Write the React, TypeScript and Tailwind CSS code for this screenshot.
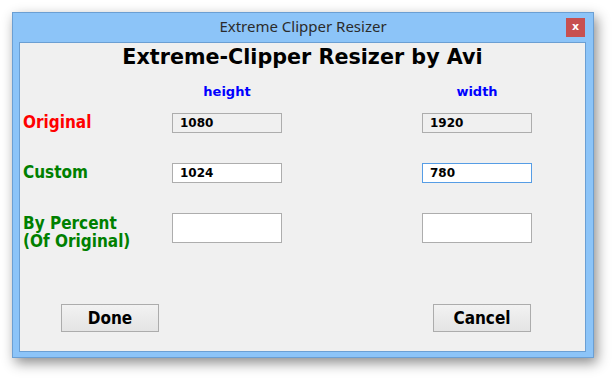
import React from 'react';

const labelFont = { fontFamily: '"DejaVu Sans Condensed", "DejaVu Sans", sans-serif' };

interface FieldProps {
  value?: string;
  readOnly?: boolean;
  focused?: boolean;
  tall?: boolean;
}

const Field: React.FC<FieldProps> = ({ value = '', readOnly = false, focused = false, tall = false }) => {
  const bg = readOnly ? 'bg-[#f0f0f0]' : 'bg-white';
  const border = focused ? 'border-[#569de5]' : 'border-[#adadad]';
  const h = tall ? 'h-[30px]' : 'h-[20px]';
  return (
    <div
      className={`w-[110px] ${h} ${bg} border ${border} flex items-center pl-[7px] text-[12px] font-bold text-black font-['DejaVu_Sans',sans-serif]`}
    >
      {value}
    </div>
  );
};

const WinButton: React.FC<{ label: string }> = ({ label }) => (
  <div
    style={labelFont}
    className="w-[98px] h-[28px] border border-[#acacac] bg-gradient-to-b from-[#f2f2f2] to-[#e4e4e4] flex items-center justify-center text-[17px] font-bold text-black leading-none"
  >
    {label}
  </div>
);

export default function App() {
  return (
    <div className="w-[614px] h-[379px] bg-white pl-[12px] pt-[12px]">
      <div className="w-[582px] h-[346px] bg-[#8cc4f8] border border-[#6b9fd3] shadow-[3px_5px_12px_rgba(0,0,0,0.45)] flex flex-col">
        {/* Title bar */}
        <div className="relative h-[29px] flex items-center justify-center">
          <span className="text-[15px] text-[#2b2b2b] font-['Noto_Sans',sans-serif] leading-none pb-[2px]">
            Extreme Clipper Resizer
          </span>
          <div className="absolute right-[8px] top-[5px] w-[19px] h-[19px] bg-[#c75050] flex items-center justify-center text-white text-[11px] font-bold font-['DejaVu_Sans',sans-serif] leading-none pb-[2px]">
            x
          </div>
        </div>

        {/* Client area */}
        <div className="ml-[6px] mr-[7px] h-[310px] border border-[#6b9fd3] bg-[#f0f0f0] flex flex-col">
          <h1 className="pt-[2px] text-center text-[20.7px] leading-[24px] font-bold text-black font-['DejaVu_Sans',sans-serif]">
            Extreme-Clipper Resizer by Avi
          </h1>

          <div className="grid grid-cols-[152px_110px_140px_110px] mt-[15px] text-[13px] leading-[16px] font-bold text-[#0000ff] font-['DejaVu_Sans',sans-serif]">
            <div />
            <div className="text-center">height</div>
            <div />
            <div className="text-center">width</div>
          </div>

          <div className="flex flex-col gap-[30px] mt-[13px]">
            <div className="grid grid-cols-[152px_110px_140px_110px] items-start">
              <div style={labelFont} className="pl-[3px] mt-[1px] text-[17px] leading-[17px] font-bold text-[#ff0000]">
                Original
              </div>
              <Field value="1080" readOnly />
              <div />
              <Field value="1920" readOnly />
            </div>
            <div className="grid grid-cols-[152px_110px_140px_110px] items-start">
              <div style={labelFont} className="pl-[3px] mt-[1px] text-[17px] leading-[17px] font-bold text-[#008000]">
                Custom
              </div>
              <Field value="1024" />
              <div />
              <Field value="780" focused />
            </div>
            <div className="grid grid-cols-[152px_110px_140px_110px] items-start">
              <div style={labelFont} className="pl-[3px] mt-[1px] text-[17px] leading-[18px] font-bold text-[#008000]">
                By Percent
                <br />
                (Of Original)
              </div>
              <Field tall />
              <div />
              <Field tall />
            </div>
          </div>

          <div className="mt-[54px] flex justify-between pl-[41px] pr-[54px]">
            <WinButton label="Done" />
            <WinButton label="Cancel" />
          </div>
        </div>
      </div>
    </div>
  );
}
